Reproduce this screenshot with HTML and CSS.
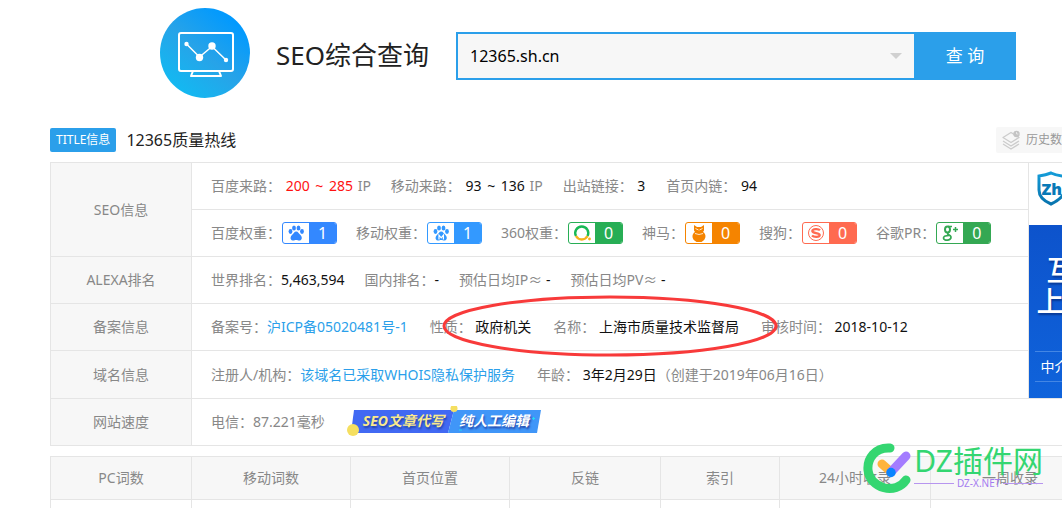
FILE: index.html
```html
<!DOCTYPE html>
<html lang="zh-CN">
<head>
<meta charset="utf-8">
<title>SEO综合查询</title>
<link rel="stylesheet" href="styles.css">
</head>
<body>
<header class="top">
  <svg class="logo" viewBox="0 0 90 90" aria-hidden="true">
    <defs><linearGradient id="disc" x1="0.15" y1="0.9" x2="0.8" y2="0.1"><stop offset="0" stop-color="#12baf2"/><stop offset=".5" stop-color="#27a3e8"/><stop offset="1" stop-color="#0099ff"/></linearGradient></defs>
    <circle cx="45" cy="45" r="45" fill="url(#disc)"/>
    <g fill="none" stroke="#fff" stroke-width="2" stroke-linejoin="round">
      <rect x="19" y="25" width="54" height="38" rx="2"/>
      <path d="M33 63l-2 5h30l-2-5"/>
      <path stroke-width="1.5" d="M26.500 36L39.500 49 52 38.500 66 52"/>
    </g>
    <g fill="#fff"><circle cx="26.500" cy="36" r="2.200"/><circle cx="39.500" cy="49.500" r="3.700"/><circle cx="52" cy="38" r="3.700"/><circle cx="66" cy="52" r="2.200"/></g>
  </svg>
  <h1 class="heading">SEO综合查询</h1>
  <form class="search">
    <div class="field">
      <input class="domain" type="text" value="12365.sh.cn" aria-label="域名">
      <button class="history-toggle" type="button" aria-label="查询历史"></button>
    </div>
    <button class="submit" type="button">查 询</button>
  </form>
</header>

<main class="content">
  <div class="title-bar">
    <span class="tag">TITLE信息</span>
    <h2 class="site-title">12365质量热线</h2>
    <a class="history" href="#history">
      <svg class="history-icon" viewBox="0 0 20 20" aria-hidden="true"><g fill="none" stroke="#ccc" stroke-width="1.300" stroke-linejoin="round"><path d="M2 7.500l8-5 8 5-8 5z"/><path d="M2 11l8 5 8-5M2 14l8 5 8-5"/></g><circle cx="15.500" cy="4" r="3.200" fill="#c4c4c4"/><path d="M15.500 2v2h1.800" fill="none" stroke="#eee" stroke-width=".8"/></svg>
      历史数据
    </a>
  </div>

  <table class="info">
    <colgroup><col class="col-name"><col><col class="col-ad"></colgroup>
    <tbody>
    <tr>
      <th rowspan="2" scope="row">SEO信息</th>
      <td><div class="line traffic">
        <span>百度来路： <b class="hot">200 <i>~</i> 285</b> IP</span>
        <span>移动来路： <b>93 <i>~</i> 136</b> IP</span>
        <span>出站链接： <b>3</b></span>
        <span>首页内链： <b>94</b></span>
      </div></td>
      <td class="ad-cell" rowspan="5">
        <a class="ad" href="#ad">
          <svg class="shield" viewBox="0 0 34 62" aria-hidden="true"><defs><linearGradient id="sh" x2="0" y2="1"><stop offset="0" stop-color="#149bd7"/><stop offset="1" stop-color="#0874ae"/></linearGradient></defs><path d="M10 13q7-1 12-3 6 3 14 3v14q-2 9-14 14-12-5-12-14z" fill="#fff" stroke="url(#sh)" stroke-width="3"/></svg>
          <span class="brand">Zh</span>
          <span class="ad-body">
            <span class="slogan">互</span>
            <span class="slogan second">上</span>
            <span class="agency">中介</span>
          </span>
        </a>
      </td>
    </tr>
    <tr>
      <td><div class="line ranks">
        <span class="rank">百度权重：<a class="badge baidu" href="#baidu"><svg viewBox="0 0 26 20" aria-hidden="true"><g fill="currentColor"><ellipse cx="7.500" cy="8.500" rx="1.900" ry="2.400"/><ellipse cx="11" cy="5" rx="1.900" ry="2.500"/><ellipse cx="15.500" cy="5" rx="1.900" ry="2.500"/><ellipse cx="19" cy="8.500" rx="1.900" ry="2.400"/><path d="M13.200 8.500c2 0 2.500 2 4 3.300 2 1.600 2.500 5.200-.5 5.700-1.500.2-2-.5-3.500-.5s-2 .7-3.500.5c-3-.5-2.500-4.100-.5-5.700 1.500-1.300 2-3.300 4-3.300z"/></g></svg><b>1</b></a></span>
        <span class="rank">移动权重：<a class="badge mobile" href="#mobile"><svg viewBox="0 0 26 20" aria-hidden="true"><g fill="currentColor"><ellipse cx="7.500" cy="8.500" rx="1.900" ry="2.400"/><ellipse cx="11" cy="5" rx="1.900" ry="2.500"/><ellipse cx="15.500" cy="5" rx="1.900" ry="2.500"/><ellipse cx="19" cy="8.500" rx="1.900" ry="2.400"/><path d="M13.200 8.500c2 0 2.500 2 4 3.300 2 1.600 2.500 5.200-.5 5.700-1.500.2-2-.5-3.500-.5s-2 .7-3.500.5c-3-.5-2.500-4.100-.5-5.700 1.500-1.300 2-3.300 4-3.300z"/></g><path d="M11 16.500v-4.300l2.200 2.600 2.200-2.600v4.300" fill="none" stroke="#fff" stroke-width="1.200"/></svg><b>1</b></a></span>
        <span class="rank">360权重：<a class="badge so" href="#so"><svg viewBox="0 0 26 20" aria-hidden="true"><g fill="none" stroke-width="2.400"><path d="M7 13a6.500 6.500 0 1 1 11.500 0" stroke="#19b955"/><path d="M7 13a6.500 6.500 0 0 0 11.500 0" stroke="#f6b21b"/></g><circle cx="20.500" cy="16" r="1.400" fill="#f6b21b"/></svg><b>0</b></a></span>
        <span class="rank">神马：<a class="badge sm" href="#sm"><svg viewBox="0 0 26 20" aria-hidden="true"><path fill="currentColor" d="M8 2l3 2h4l3-2v5.500l-1 1.500c3.500 2 3 6.500.5 8.500l-2 1.500h-5l-2-1.500C6 15.500 5.500 11 9 9L8 7.500z"/><path d="M9.500 5.500l3 1.500m4-1.500l-3 1.500M9 10.500q4 2 8 0" stroke="#fff" stroke-width=".8" fill="none"/></svg><b>0</b></a></span>
        <span class="rank">搜狗：<a class="badge sogou" href="#sogou"><svg viewBox="0 0 26 20" aria-hidden="true"><circle cx="13" cy="10" r="7.500" fill="none" stroke="currentColor"/><path d="M17 7.200C15.500 5.500 9.500 5.600 9.300 8c-.1 2.500 7.400 1.600 7.400 4 0 2.300-6 2.300-7.700.4" fill="none" stroke="currentColor" stroke-width="2.300"/></svg><b>0</b></a></span>
        <span class="rank">谷歌PR：<a class="badge google" href="#google"><svg viewBox="0 0 26 20" aria-hidden="true"><g fill="none" stroke="currentColor"><ellipse cx="10.500" cy="6.500" rx="2.500" ry="3" stroke-width="2"/><path d="M11 3.500h4M11.500 9.500c-3 2 2 2 2.500 4.500.3 4-7.500 4-7.500 1 0-2 3-2.500 5.500-2.500" stroke-width="1.700"/><path d="M18.500 4v5M16 6.500h5" stroke-width="1.500"/></g></svg><b>0</b></a></span>
      </div></td>
    </tr>
    <tr>
      <th scope="row">ALEXA排名</th>
      <td><div class="line">
        <span>世界排名：<b>5,463,594</b></span>
        <span>国内排名：<b>-</b></span>
        <span>预估日均IP≈ <b>-</b></span>
        <span>预估日均PV≈ <b>-</b></span>
      </div></td>
    </tr>
    <tr>
      <th scope="row">备案信息</th>
      <td><div class="line record marked">
        <span>备案号：<a href="#icp">沪ICP备05020481号-1</a></span>
        <span>性质： <b>政府机关</b></span>
        <span>名称： <b>上海市质量技术监督局</b></span>
        <span>审核时间： <b>2018-10-12</b></span>
        <svg class="ring" viewBox="0 0 336 62" aria-hidden="true"><ellipse cx="168" cy="31" rx="166" ry="29" fill="none" stroke="#f83a3a" stroke-width="3"/></svg>
      </div></td>
    </tr>
    <tr class="tall">
      <th scope="row">域名信息</th>
      <td><div class="line record">
        <span>注册人/机构：<a href="#whois">该域名已采取WHOIS隐私保护服务</a></span>
        <span>年龄： <b>3年2月29日</b>（创建于2019年06月16日）</span>
      </div></td>
    </tr>
    <tr>
      <th scope="row">网站速度</th>
      <td colspan="2"><div class="line record">
        <span>电信：87.221毫秒</span>
        <a class="promo" href="#promo">
          <svg class="promo-art" viewBox="0 0 194 32" aria-hidden="true"><path d="M7 4h100l-6 23H4z" fill="#4169f3"/><path d="M107 4h87l-4 23h-89z" fill="#4096f8"/><circle cx="6" cy="24" r="6" fill="#f5df60"/><circle cx="107" cy="2.500" r="3.500" fill="#f5df60"/><path d="M185 12.500h3M186.500 11v3M112 24h3" stroke="#20dff5"/></svg>
          <span class="promo-text"><em>SEO文章代写</em><em class="plain">纯人工编辑</em></span>
        </a>
      </div></td>
    </tr>
    </tbody>
  </table>

  <table class="counts">
    <colgroup><col class="w-a"><col class="w-c"><col class="w-c"><col class="w-b"><col class="w-s"><col class="w-b"><col class="w-c"></colgroup>
    <thead><tr><th scope="col">PC词数</th><th scope="col">移动词数</th><th scope="col">首页位置</th><th scope="col">反链</th><th scope="col">索引</th><th scope="col">24小时收录</th><th scope="col">一周收录</th></tr></thead>
    <tbody><tr><td></td><td></td><td></td><td></td><td></td><td></td><td></td></tr></tbody>
  </table>
</main>

<div class="watermark">
  <svg class="mark" viewBox="0 0 50 52" aria-hidden="true"><path d="M27 6C12 5 4 17 5 28c2 19 28 25 38 10" transform="translate(0 1)" fill="none" stroke="#34d671" stroke-width="9" stroke-linecap="round"/><g stroke-width="9" stroke-linecap="round"><path d="M19 23l9 8" stroke="#ffb43c"/><path d="M28 31l15-16" stroke="#a47cff"/></g><circle cx="28" cy="31.500" r="4.700" fill="#0a84ff"/></svg>
  <div class="wm-text">
    <span class="wm-name">DZ插件网</span>
    <span class="wm-url">DZ-X.NET</span>
  </div>
</div>
</body>
</html>
```
FILE: styles.css
```css
* { box-sizing: border-box; }

body {
  position: relative;
  min-height: 100vh;
  margin: 0;
  overflow: hidden;
  background: #fff;
  color: #888;
  font: 14px/20px "Noto Sans", "Noto Sans CJK SC", sans-serif;
}

a { color: #2b9fea; text-decoration: none; }
b { color: #111; font-weight: 400; }
i { font-style: normal; }
button, input { border: 0; padding: 0; font: inherit; }

/* Header */
.top {
  display: flex;
  align-items: center;
  padding: 8px 46px 0 160px;
}
.logo { flex: none; width: 90px; height: 90px; }
.heading {
  flex: none;
  margin: 4px 27px 0 26px;
  color: #222;
  font-size: 26px;
  line-height: 40px;
  font-weight: 400;
}
.search { display: flex; flex: 1; height: 48px; margin-top: 6px; }
.field {
  display: flex;
  flex: 1;
  align-items: center;
  border: 2px solid #2b9fea;
  border-right: 0;
  background: #f7f7f7;
}
.domain {
  flex: 1;
  min-width: 0;
  height: 100%;
  padding-left: 12px;
  background: none;
  color: #000;
  font-size: 16px;
  outline: 0;
}
.history-toggle {
  width: 12px;
  height: 6px;
  margin-right: 12px;
  background: #d0d0d0;
  clip-path: polygon(0 0, 100% 0, 50% 100%);
}
.submit { width: 102px; background: #2b9fea; color: #fff; font-size: 17px; }

/* Page title row */
.content { padding: 28px 0 0 50px; }
.title-bar { display: flex; align-items: center; height: 28px; margin-bottom: 8px; }
.tag {
  padding: 0 6px;
  border-radius: 2px;
  background: #2b9fea;
  color: #fff;
  font-size: 12px;
  line-height: 24px;
}
.site-title { margin: 0 0 0 10px; color: #222; font-size: 16px; font-weight: 400; }
.history {
  display: flex;
  align-items: center;
  gap: 5px;
  width: 66px;
  height: 26px;
  margin-left: auto;
  padding-left: 5px;
  overflow: hidden;
  border-radius: 2px 0 0 2px;
  background: #f7f7f7;
  color: #999;
  font-size: 12px;
  white-space: nowrap;
}
.history-icon { flex: none; width: 20px; height: 20px; }

/* Tables */
table { border-collapse: collapse; table-layout: fixed; }
th, td { border: 1px solid #e5e5e5; padding: 0; }
th { background: #f7f7f7; font-weight: 400; }
.info { width: 100%; border-right: 0; }
.info tr { height: 47px; }
.info .tall { height: 48px; }
.info td[rowspan], .info td[colspan] { border-right: 0; }
.col-name { width: 141px; }
.col-ad { width: 34px; }
.line { display: flex; align-items: center; gap: 20px; padding-left: 19px; white-space: nowrap; }
.traffic b { margin: 0 1px; }
.traffic i { margin: 0 2px; }
.ranks { gap: 19px; }
.record { gap: 22px; }
.marked { position: relative; }
.ring { position: absolute; left: 250px; top: -22px; width: 336px; height: 62px; }
.hot { color: #f11; }

/* Search-engine badges */
.rank { display: flex; align-items: center; }
.badge {
  display: flex;
  width: 55px;
  height: 22px;
  margin-left: 1px;
  border: 1px solid currentColor;
  border-radius: 3px;
  overflow: hidden;
}
.badge svg { width: 26px; height: 20px; }
.badge b {
  flex: 1;
  background: var(--tone);
  color: #fff;
  font-size: 16px;
  line-height: 20px;
  text-align: center;
}
.baidu { --tone: #3388ff; color: #3388ff; }
.mobile { --tone: #3399ff; color: #3399ff; }
.so { --tone: #27ae55; color: #27ae55; }
.sm { --tone: #f58400; color: #f58400; }
.sogou { --tone: #ff6a50; color: #ff6a50; }
.google { --tone: #34a853; color: #34a853; }

/* Side advertisement */
.ad-cell { vertical-align: top; }
.ad { display: flex; flex-direction: column; position: relative; height: 235px; overflow: hidden; }
.shield { flex: none; width: 34px; height: 62px; }
.brand {
  position: absolute;
  left: 13px;
  top: 16px;
  color: #0879b7;
  font-size: 16px;
  font-weight: 900;
  line-height: 20px;
}
.ad-body {
  display: flex;
  flex: 1;
  flex-direction: column;
  padding-top: 30px;
  background: linear-gradient(#0d53cc, #0f63db);
  color: #fff;
  white-space: nowrap;
}
.slogan {
  padding-left: 18px;
  font-size: 28px;
  font-weight: 500;
  line-height: 31px;
  text-shadow: 1px 2px 2px #083995;
}
.second { padding-left: 8px; }
.agency {
  margin: 34px 0 0 6px;
  padding-left: 6px;
  border: solid #4386e4;
  border-width: 1px 0;
  line-height: 29px;
}

/* Inline promo */
.promo { position: relative; }
.promo-art { display: block; width: 194px; height: 32px; }
.promo-text {
  position: absolute;
  inset: 5px 0 auto 16px;
  display: flex;
  gap: 15px;
  font-weight: 700;
  text-shadow: 1px 2px 2px #2344a8;
}
.promo-text em { color: #fae98c; }
.promo-text .plain { color: #fff; }

/* Counters */
.counts { width: calc(100% + 28px); margin-top: 10px; }
.counts th { height: 43px; }
.counts td { height: 8px; border-bottom: 0; }
.w-a { width: 141px; }
.w-b { width: 151px; }
.w-c { width: 159px; }
.w-s { width: 119px; }

/* Watermark laid over the page corner */
.watermark { position: absolute; right: 19px; bottom: 15px; display: flex; align-items: flex-start; gap: 1px; }
.mark { width: 50px; height: 52px; }
.wm-text { display: flex; flex-direction: column; padding-top: 4px; }
.wm-name { color: #34d671; font-size: 30px; line-height: 32px; }
.wm-url {
  display: flex;
  align-items: center;
  gap: 3px;
  color: #a47cf0;
  font-size: 10px;
  line-height: 12px;
}
.wm-url::before, .wm-url::after { content: ""; flex: 1; height: 1px; background: #b795ef; }
```
